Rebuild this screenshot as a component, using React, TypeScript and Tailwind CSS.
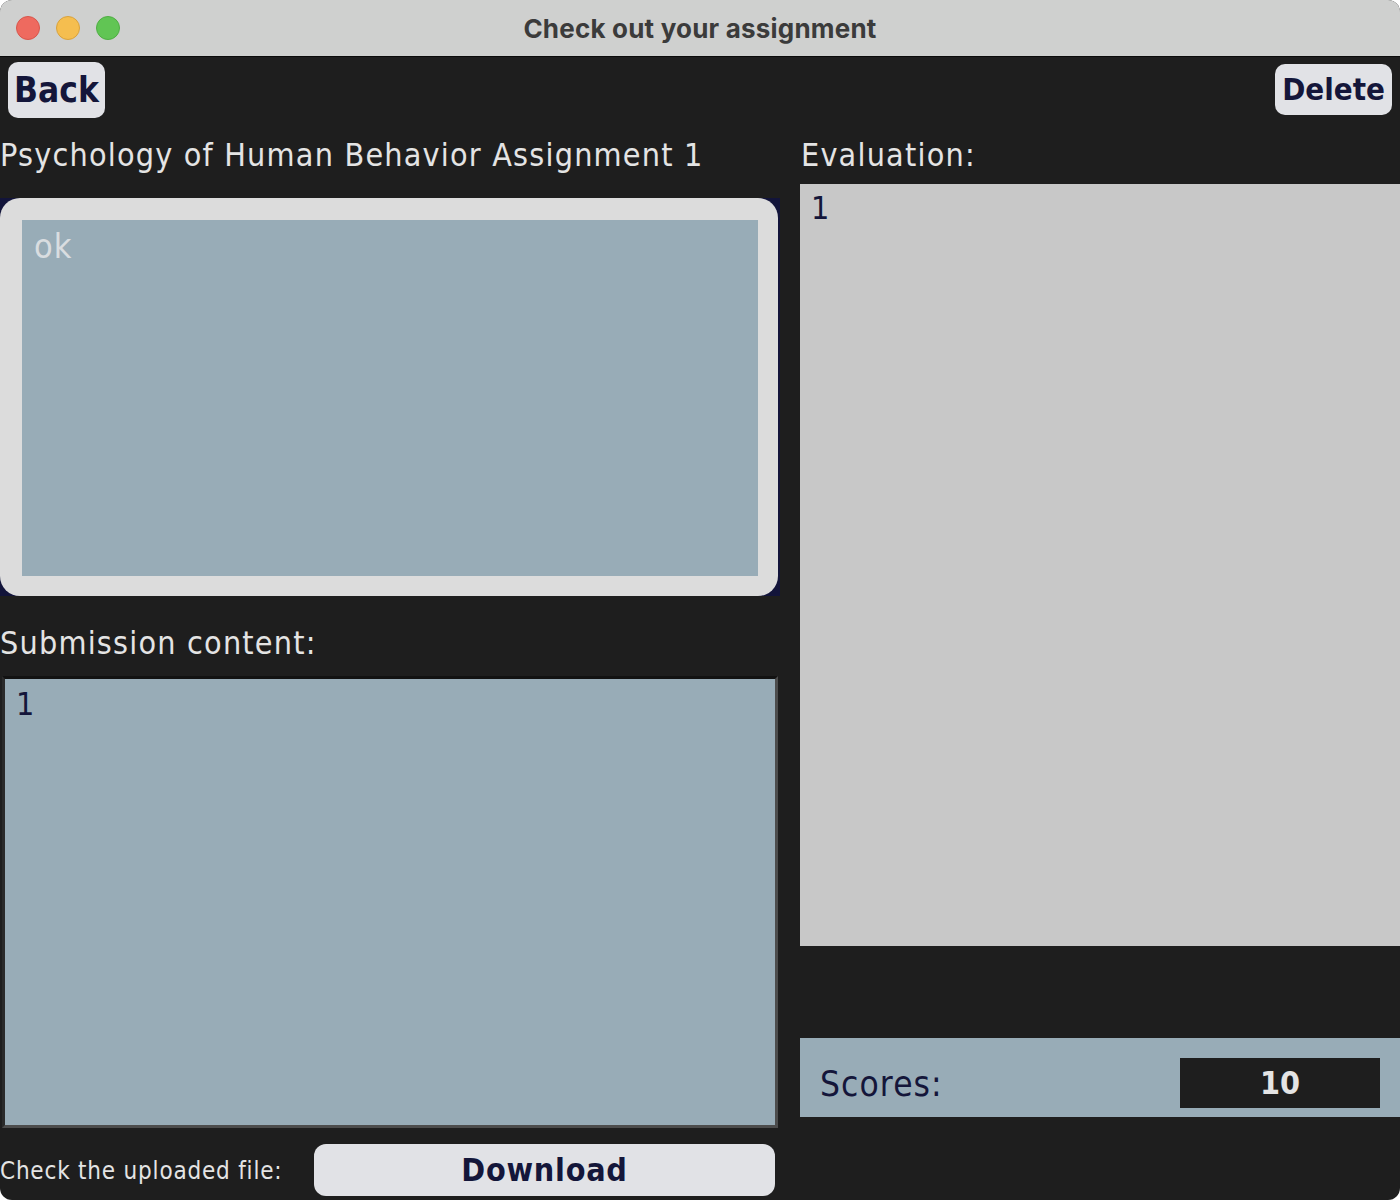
import React from "react";

const body = "font-['DejaVu_Sans_Condensed','DejaVu_Sans',sans-serif]";

const TrafficLights = () => (
  <div className="absolute left-[16px] top-[16px] flex gap-[16px]">
    <span className="w-[24px] h-[24px] rounded-full bg-[#ee6a5f] border border-[#d8564c]" />
    <span className="w-[24px] h-[24px] rounded-full bg-[#f5be4f] border border-[#d9a23d]" />
    <span className="w-[24px] h-[24px] rounded-full bg-[#61c554] border border-[#4fae43]" />
  </div>
);

export default function App() {
  return (
    <div className="w-[1400px] h-[1200px] bg-white">
      <div
        className={`w-full h-full rounded-[12px] overflow-hidden flex flex-col bg-[#1e1e1e] ${body}`}
      >
        {/* Title bar */}
        <div className="relative h-[57px] shrink-0 bg-[#cfd0cf] border-b border-[#0b0b0b] flex items-center justify-center">
          <TrafficLights />
          <span className="font-['Inter',sans-serif] font-bold text-[26px] text-[#3b3b3b] tracking-[0.2px]">
            Check out your assignment
          </span>
        </div>

        {/* Toolbar */}
        <div className="flex items-start justify-between px-[8px] pt-[5px] h-[65px] shrink-0">
          <button className="h-[56px] px-[6px] rounded-[10px] bg-[#e1e2e6] text-[#14163a] font-bold text-[35px] leading-none">
            Back
          </button>
          <button className="mt-[2px] h-[51px] px-[7px] rounded-[10px] bg-[#e1e2e6] text-[#14163a] font-bold text-[31px] leading-none">
            Delete
          </button>
        </div>

        {/* Main */}
        <div className="flex-1 flex gap-[22px]">
          {/* Left column */}
          <div className="w-[778px] flex flex-col">
            <div className="h-[76px] pt-[15px] text-[32px] tracking-[1.2px] leading-[36px] text-[#e4e4e4] whitespace-nowrap">
              Psychology of Human Behavior Assignment 1
            </div>

            <div className="h-[398px] w-[780px] bg-[#12143a]">
              <div className="h-full w-[778px] rounded-[20px] bg-[#dcdcdc] p-[22px] pr-[20px] pb-[20px]">
                <div className="h-full bg-[#98acb7] px-[12px] pt-[6px] text-[34px] tracking-[1px] leading-[40px] text-[#d9dde0]">
                  ok
                </div>
              </div>
            </div>

            <div className="h-[80px] pt-[29px] text-[32px] tracking-[1.2px] leading-[36px] text-[#e4e4e4]">
              Submission content:
            </div>

            <div className="ml-[2px] h-[452px] bg-[#98acb7] border-t-[3px] border-l-[3px] border-t-[#121212] border-l-[#2a2a2a] border-r-[3px] border-b-[3px] border-r-[#4c4c4c] border-b-[#4c4c4c] px-[11px] pt-[5px] text-[32px] leading-[40px] text-[#14163a]">
              1
            </div>

            <div className="flex items-center mt-[16px] h-[52px]">
              <span className="w-[314px] text-[24px] tracking-[0.8px] text-[#e4e4e4] whitespace-nowrap pt-[1px]">
                Check the uploaded file:
              </span>
              <button className="w-[461px] h-[52px] rounded-[12px] bg-[#e1e2e6] text-[#14163a] font-bold text-[32px] tracking-[0.75px] leading-none">
                Download
              </button>
            </div>
          </div>

          {/* Right column */}
          <div className="flex-1 flex flex-col">
            <div className="h-[62px] pt-[15px] pl-[1px] text-[32px] tracking-[1.2px] leading-[36px] text-[#e4e4e4]">
              Evaluation:
            </div>
            <div className="h-[762px] bg-[#c8c8c8] px-[11px] pt-[4px] text-[32px] leading-[40px] text-[#14163a]">
              1
            </div>
            <div className="mt-[92px] h-[79px] bg-[#98acb7] flex items-start justify-between pl-[20px] pr-[20px] pt-[20px]">
              <span className="text-[35px] tracking-[1.1px] leading-[40px] text-[#14163a] pt-[6px]">
                Scores:
              </span>
              <div className="w-[200px] h-[50px] bg-[#1e1e1e] flex items-center justify-center text-[32px] font-bold text-[#e4e4e4]">
                10
              </div>
            </div>
          </div>
        </div>
      </div>
    </div>
  );
}
